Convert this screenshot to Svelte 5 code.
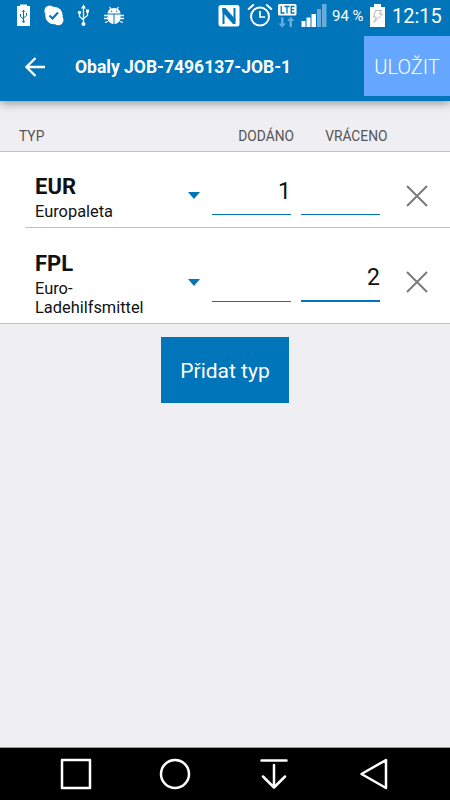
<script>
  let rows = $state([
    { id: 1, code: 'EUR', name: 'Europaleta', delivered: '1', returned: '', focused: false },
    { id: 2, code: 'FPL', name: 'Euro-Ladehilfsmittel', delivered: '', returned: '2', focused: true }
  ]);
  let nextId = 3;

  function addRow() {
    rows.push({ id: nextId++, code: 'EUR', name: 'Europaleta', delivered: '', returned: '', focused: false });
  }

  function removeRow(id) {
    rows = rows.filter((row) => row.id !== id);
  }
</script>

<div class="screen">
  <div class="status-bar">
    <svg class="notifications" width="130" height="32" viewBox="0 0 130 32" fill="#fff">
      <path d="M17 6h3V4.500h7V6h3v20H17z" />
      <g stroke="#0075b9" fill="none">
        <path d="M23.500 11v11M20.500 14v2.500l3 2.500M26.500 13v2.500l-3 2.500" />
        <path d="M22 12l1.500-2.500L25 12z" fill="#0075b9" stroke="none" />
        <circle cx="23.500" cy="21.500" r="1.200" fill="#0075b9" stroke="none" />
      </g>

      <circle cx="54" cy="15.500" r="8.700" />
      <circle cx="49.700" cy="10.800" r="5.300" />
      <circle cx="58.300" cy="20" r="5.200" />
      <path d="M49.500 15.500l3 3 5.500-6" fill="none" stroke="#0075b9" stroke-width="2" />

      <g fill="none" stroke="#fff" stroke-width="1.300">
        <path d="M83.500 8v15M79.500 13v3.500l4 3.500M87.500 12v3.500l-4 3" />
      </g>
      <path d="M81 8.500l2.500-4 2.500 4zM86 9.500h3v3h-3z" />
      <circle cx="79.500" cy="12.500" r="1.700" />
      <circle cx="83.500" cy="24" r="2" />

      <path d="M107.500 13.500a6.500 5.500 0 0 1 13 0z" />
      <path d="M109.500 7l2 3M118.500 7l-2 3M104 15.500h4M104 18.500h4M105 22.500l3-1M124 15.500h-4M124 18.500h-4M123 22.500l-3-1" fill="none" stroke="#fff" stroke-width="1.300" />
      <path d="M107.500 14.500h6v9.500c-4-.6-6-3.400-6-6zM114.500 14.500h6V18c0 2.600-2 5.400-6 6z" />
      <circle cx="111.500" cy="11.300" r=".7" fill="#0075b9" />
      <circle cx="116.500" cy="11.300" r=".7" fill="#0075b9" />
    </svg>

    <svg class="signals" width="110" height="32" viewBox="218 0 110 32">
      <rect x="218.500" y="5" width="21" height="21.500" rx="2.500" fill="#fff" />
      <path d="M223.500 24V11M234.500 8v13" fill="none" stroke="#0075b9" stroke-width="2" />
      <path d="M222 8h3.500l10 11.500v4.500H233L222.500 12z" fill="#0075b9" />

      <g fill="none" stroke="#fff" stroke-width="2" stroke-linecap="round">
        <circle cx="260" cy="16.500" r="9" />
        <path d="M248.700 9l4.500-4M271.300 9l-4.500-4" />
        <path d="M260 11.500V17h4.500" stroke-width="1.700" />
      </g>

      <rect x="278" y="4" width="18.500" height="11.500" rx="1.500" fill="#fff" />
      <path d="M281.200 6v7h3.300M284.500 6.500h5M287 6.500v7M294.500 6.500h-3.300v6.500h3.300M291.200 9.700h3" fill="none" stroke="#0075b9" stroke-width="1.300" />
      <path d="M281 17.500h2.500v6h2.500l-3.800 4-3.700-4h2.500zM289.500 27H292v-6h2.500l-3.700-4-3.800 4h2.500z" fill="#67addb" />

      <path d="M301.500 21h4v6h-4zM306.500 17.500h4V27h-4zM311.500 14h4.500v13h-4.500z" fill="#fff" />
      <path d="M317 9h4v18h-4zM322 4h4.500v23H322z" fill="#67addb" />
    </svg>
    <span class="percent">94 %</span>
    <svg class="battery" width="15" height="24" viewBox="0 0 15 24">
      <path d="M0 3h4V0h7v3h4v20H0z" fill="#fff" />
      <path d="M5.500 6.500h6L9.500 10h3L4 18.500 6.500 13H3.500z" fill="none" stroke="#b7b7b7" />
    </svg>
    <span class="clock">12:15</span>
  </div>

  <header class="toolbar">
    <button class="back" aria-label="Zpět">
      <svg width="20" height="20" viewBox="0 0 20 20" fill="none" stroke="#fff" stroke-width="2.300">
        <path d="M20 10H2M10.500 1L1.500 10l9 9" />
      </svg>
    </button>
    <h1>Obaly JOB-7496137-JOB-1</h1>
    <button class="save">ULOŽIT</button>
  </header>

  <main>
    <div class="list-header">
      <span>TYP</span>
      <span class="num">DODÁNO</span>
      <span class="num">VRÁCENO</span>
    </div>

    <div class="list">
      {#each rows as row (row.id)}
        <div class="row">
          <div class="type">
            <strong>{row.code}</strong>
            <span>{row.name}</span>
          </div>
          <svg class="caret" width="12" height="7" viewBox="0 0 12 7">
            <path d="M0 0h12L6 7z" fill="#0075b9" />
          </svg>
          <input type="text" inputmode="numeric" aria-label="Dodáno" bind:value={row.delivered} />
          <input type="text" inputmode="numeric" aria-label="Vráceno" class:focused={row.focused} bind:value={row.returned} />
          <button class="remove" aria-label="Odebrat" onclick={() => removeRow(row.id)}>
            <svg width="22" height="22" viewBox="0 0 22 22" fill="none" stroke="#7b7b7b" stroke-width="2">
              <path d="M1 1l20 20M21 1L1 21" />
            </svg>
          </button>
        </div>
      {/each}
    </div>

    <button class="add" onclick={addRow}>Přidat typ</button>
  </main>

  <nav>
    <svg width="32" height="32" viewBox="0 0 32 32"><rect x="2" y="2" width="28" height="28" /></svg>
    <svg width="32" height="32" viewBox="0 0 32 32"><circle cx="16" cy="16" r="14" /></svg>
    <svg width="32" height="32" viewBox="0 0 32 32"><path d="M2.500 2.500h25M15 7v22M4 18.500L15 29.500l11-11" /></svg>
    <svg width="32" height="32" viewBox="0 0 32 32"><path d="M28 2v28L3.500 16z" /></svg>
  </nav>
</div>

<style>
  :global(body) {
    margin: 0;
  }

  .screen {
    display: flex;
    flex-direction: column;
    width: 450px;
    height: 800px;
    overflow: hidden;
    background: #eeeef3;
    font-family: Roboto, sans-serif;
    color: #111;
  }

  button {
    padding: 0;
    border: 0;
    background: none;
    font-family: inherit;
    cursor: pointer;
  }

  svg {
    display: block;
    flex: none;
  }

  .status-bar {
    position: relative;
    z-index: 1;
    display: flex;
    align-items: center;
    flex: none;
    height: 32px;
    background: #0075b9;
    color: #fff;
    white-space: nowrap;
  }

  .signals {
    margin-left: auto;
  }

  .percent {
    width: 38px;
    padding-left: 4px;
    box-sizing: border-box;
    font-size: 15px;
    margin-right: 4px;
  }

  .clock {
    width: 58px;
    margin-left: 7px;
    font-size: 20px;
  }

  .toolbar {
    display: flex;
    align-items: center;
    flex: none;
    height: 69px;
    background: #0075b9;
    color: #fff;
    box-shadow: 0 2px 9px rgba(0, 0, 0, 0.4);
  }

  .back {
    margin-left: 25px;
  }

  h1 {
    flex: 1;
    margin: 1px 0 0 30px;
    font-size: 17.5px;
    font-weight: 700;
    white-space: nowrap;
  }

  .save {
    width: 86px;
    height: 60px;
    margin-bottom: 1px;
    padding-top: 1px;
    background: #65a7ff;
    color: #fff;
    font-size: 20px;
    font-weight: 300;
  }

  main {
    flex: 1;
  }

  .list-header {
    display: grid;
    grid-template-columns: 1fr 94px 93.500px;
    align-items: end;
    height: 51px;
    padding: 0 62.500px 7px 19px;
    box-sizing: border-box;
    border-bottom: 1px solid #bcc3ca;
    font-size: 13.8px;
    color: #555;
  }

  .num {
    text-align: right;
  }

  .list {
    background: #fff;
    border-bottom: 1px solid #bcc3ca;
  }

  .row {
    display: flex;
    align-items: center;
    margin-left: 25px;
    padding: 21px 0 6px 10px;
  }

  .row + .row {
    padding-top: 22px;
    border-top: 1px solid #bcc3ca;
  }

  .type {
    width: 153px;
    padding-right: 40px;
    box-sizing: border-box;
  }

  .type strong {
    display: block;
    margin-bottom: 2px;
    font-size: 22px;
    line-height: 27px;
  }

  .type span {
    display: block;
    font-size: 16.4px;
    line-height: 19px;
  }

  input {
    width: 79px;
    height: 40px;
    margin: 0 0 4px 10px;
    padding: 0 0 6px;
    box-sizing: border-box;
    border: 0;
    border-bottom: 1px solid #0075b9;
    outline: 0;
    background: none;
    font-family: inherit;
    font-size: 23px;
    color: #111;
    text-align: right;
  }

  .caret {
    margin-bottom: 3px;
  }

  .caret + input {
    margin-left: 12px;
  }

  input.focused {
    border-bottom-width: 2px;
  }

  .remove {
    margin: 0 0 3px 26px;
  }

  .add {
    display: block;
    width: 128px;
    height: 66px;
    margin: 13px auto 0;
    padding-top: 2px;
    background: #0075b9;
    color: #fff;
    font-size: 21px;
  }

  nav {
    display: flex;
    flex: none;
    gap: 67.300px;
    height: 53px;
    padding-left: 60px;
    box-sizing: border-box;
    align-items: center;
    background: #000;
    border-top: 1px solid #9a9a9a;
    fill: none;
    stroke: #fff;
    stroke-width: 2.500;
    stroke-linecap: round;
    stroke-linejoin: round;
  }
</style>
